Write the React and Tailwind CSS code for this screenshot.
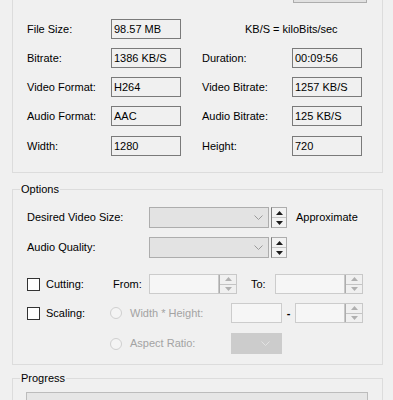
import React from 'react';

const FONT = { fontFamily: '"Liberation Sans", Arial, sans-serif' };

function ReadBox({ value }) {
  return (
    <div className="w-[70px] h-[20px] border border-[#7a7a7a] bg-[#f0f0f0] pl-[2px] flex items-center leading-none">
      {value}
    </div>
  );
}

function Chevron({ color }) {
  return (
    <svg width="9" height="6" viewBox="0 0 9 6" fill="none">
      <polyline points="0.5,0.5 4.5,4.5 8.5,0.5" stroke={color} strokeWidth="1" />
    </svg>
  );
}

function Arrows({ color }) {
  return (
    <>
      <div className="flex-1 flex items-center justify-center border-b border-[#c4c4c4]">
        <svg width="7" height="4" viewBox="0 0 7 4"><polygon points="3.5,0 7,4 0,4" fill={color} /></svg>
      </div>
      <div className="flex-1 flex items-center justify-center">
        <svg width="7" height="4" viewBox="0 0 7 4"><polygon points="0,0 7,0 3.5,4" fill={color} /></svg>
      </div>
    </>
  );
}

function Combo({ width, disabledDark }) {
  return (
    <div
      className={
        disabledDark
          ? 'h-[21px] bg-[#cccccc] flex items-center justify-end pr-[12px]'
          : 'h-[21px] border border-[#adadad] bg-[#e3e3e3] flex items-center justify-end pr-[5px]'
      }
      style={{ width }}
    >
      <Chevron color={disabledDark ? '#e2e2e2' : '#9a9a9a'} />
    </div>
  );
}

function UpDown() {
  return (
    <div className="w-[16px] h-[21px] border border-[#adadad] border-l-[#7a7a7a] bg-[#f2f2f2] flex flex-col">
      <Arrows color="#1a1a1a" />
    </div>
  );
}

function SpinInput({ width }) {
  return (
    <div className="h-[20px] border border-[#cccccc] bg-[#f6f6f6] flex justify-end" style={{ width }}>
      <div className="w-[17px] h-full border-l border-[#adadad] bg-[#f0f0f0] flex flex-col outline outline-1 outline-[#c8c8c8]">
        <Arrows color="#b0b0b0" />
      </div>
    </div>
  );
}

function CheckBox() {
  return <div className="w-[13px] h-[13px] border border-[#333333] bg-white shrink-0" />;
}

function Radio() {
  return <div className="w-[12px] h-[12px] rounded-full border border-[#cfcfcf] bg-[#f4f4f4] shrink-0" />;
}

const infoRows = [
  ['File Size:', '98.57 MB', null, null],
  ['Bitrate:', '1386 KB/S', 'Duration:', '00:09:56'],
  ['Video Format:', 'H264', 'Video Bitrate:', '1257 KB/S'],
  ['Audio Format:', 'AAC', 'Audio Bitrate:', '125 KB/S'],
  ['Width:', '1280', 'Height:', '720'],
];

export default function App() {
  return (
    <div className="w-[393px] h-[400px] overflow-hidden bg-[#f0f0f0] text-[11px] text-black" style={FONT}>
      {/* media info group (top edge above the window) */}
      <div className="ml-[12px] w-[371px] border-x border-b border-[#dcdcdc] pb-[16px]">
        <div className="h-[3px] flex justify-end pr-[15px]">
          <div className="w-[74px] h-[3px] border-x border-b border-[#adadad] bg-[#e1e1e1]" />
        </div>
        <div className="pl-[14px] pt-[16px] flex flex-col">
          {infoRows.map(([l1, v1, l2, v2], i) => (
            <div key={l1} className={`flex items-center h-[20px] ${i === 0 ? '' : i === 4 ? 'mt-[10px]' : 'mt-[9px]'}`}>
              <span className="w-[84px]">{l1}</span>
              <ReadBox value={v1} />
              {l2 ? (
                <>
                  <span className="ml-[21px] w-[90px]">{l2}</span>
                  <ReadBox value={v2} />
                </>
              ) : (
                <span className="ml-[64px]">KB/S = kiloBits/sec</span>
              )}
            </div>
          ))}
        </div>
      </div>

      {/* Options */}
      <fieldset className="mt-[10px] ml-[12px] w-[371px] border border-[#dcdcdc] px-[14px] pt-[11px] pb-[10px]">
        <legend className="-ml-[7px] px-[1px] leading-[13px]">Options</legend>

        <div className="flex items-center h-[21px]">
          <span className="w-[122px]">Desired Video Size:</span>
          <Combo width={120} />
          <div className="ml-[2px]"><UpDown /></div>
          <span className="ml-[9px]">Approximate</span>
        </div>

        <div className="flex items-center h-[21px] mt-[9px]">
          <span className="w-[122px]">Audio Quality:</span>
          <Combo width={120} />
          <div className="ml-[2px]"><UpDown /></div>
        </div>

        <div className="flex items-center h-[20px] mt-[16px]">
          <CheckBox />
          <span className="ml-[6px] w-[67px]">Cutting:</span>
          <span className="w-[36px]">From:</span>
          <SpinInput width={88} />
          <span className="ml-[14px] w-[24px]">To:</span>
          <SpinInput width={88} />
        </div>

        <div className="flex items-center h-[20px] mt-[9px]">
          <CheckBox />
          <span className="ml-[6px] w-[64px]">Scaling:</span>
          <Radio />
          <span className="ml-[8px] w-[101px] text-[#a3a3a3]">Width * Height:</span>
          <div className="w-[51px] h-[20px] border border-[#cccccc] bg-[#f6f6f6]" />
          <span className="w-[13px] text-center font-bold leading-none">-</span>
          <SpinInput width={68} />
        </div>

        <div className="flex items-center h-[21px] mt-[10px]">
          <div className="w-[83px]" />
          <Radio />
          <span className="ml-[8px] w-[101px] text-[#a3a3a3]">Aspect Ratio:</span>
          <Combo width={51} disabledDark />
        </div>
      </fieldset>

      {/* Progress */}
      <fieldset className="mt-[7px] ml-[12px] w-[371px] border border-[#dcdcdc] px-[13px] pt-[7px] pb-[10px]">
        <legend className="-ml-[6px] px-[1px] leading-[13px]">Progress</legend>
        <div className="w-[342px] h-[23px] border border-[#bcbcbc] bg-[#e6e6e6]" />
      </fieldset>
    </div>
  );
}
